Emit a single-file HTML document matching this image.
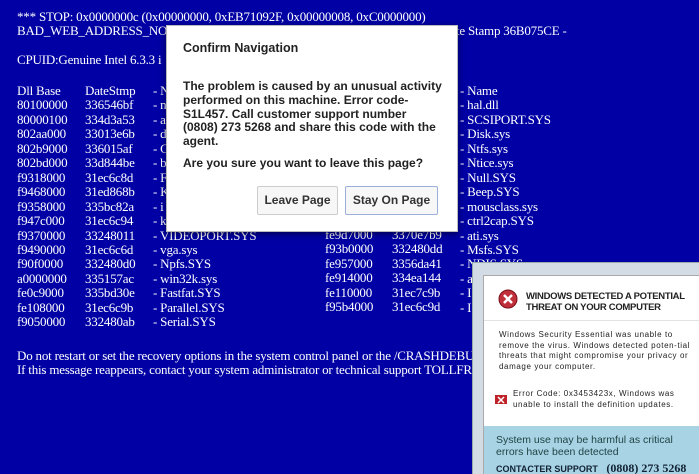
<!DOCTYPE html>
<html><head><meta charset="utf-8"><style>
html,body{margin:0;width:699px;height:474px;overflow:hidden;}
body{background:#0000a4;position:relative;font-family:"Liberation Serif",serif;color:#fff;}
.t{position:absolute;font-size:13px;line-height:15px;white-space:nowrap;letter-spacing:-.2px}
.dlg{position:absolute;left:166px;top:25px;width:290px;height:205px;background:#fff;border:1px solid #bbb;box-shadow:0 2px 6px rgba(0,0,0,.5);font-family:"Liberation Sans",sans-serif;color:#222;font-weight:bold;}
.dlg .h{position:absolute;left:16px;top:15px;font-size:12.5px;}
.dlg .b{position:absolute;left:16px;top:54px;font-size:12px;line-height:13.8px;white-space:nowrap;}
.dlg .q{position:absolute;left:16px;top:130px;font-size:12px;}
.btn{position:absolute;top:160px;height:27px;border:1px solid #ccc;border-radius:2px;background:#f7f7f7;font-size:12px;line-height:27px;text-align:center;color:#333;}
.pop{position:absolute;left:472px;top:262px;width:240px;height:220px;background:#d3dbe4;border:1px solid #9aa;}
.inner{position:absolute;left:10px;top:12px;width:230px;height:210px;background:#fff;border:1px solid #aaa;font-family:"Liberation Sans",sans-serif;color:#222;}
</style></head><body>
<div class="t" style="left:17px;top:9px">*** STOP: 0x0000000c (0x00000000, 0xEB71092F, 0x00000008, 0xC0000000)</div>
<div class="t" style="left:17px;top:23px">BAD_WEB_ADDRESS_NOT_FOUND</div>
<div class="t" style="left:456px;top:23px">te Stamp 36B075CE -</div>
<div class="t" style="left:17px;top:52px">CPUID:Genuine Intel 6.3.3 i</div>
<div class="t" style="left:17px;top:84px;line-height:14.45px">Dll Base<br>80100000<br>80000100<br>802aa000<br>802b9000<br>802bd000<br>f9318000<br>f9468000<br>f9358000<br>f947c000<br>f9370000<br>f9490000<br>f90f0000<br>a0000000<br>fe0c9000<br>fe108000<br>f9050000</div>
<div class="t" style="left:85px;top:84px;line-height:14.45px">DateStmp<br>336546bf<br>334d3a53<br>33013e6b<br>336015af<br>33d844be<br>31ec6c8d<br>31ed868b<br>335bc82a<br>31ec6c94<br>33248011<br>31ec6c6d<br>332480d0<br>335157ac<br>335bd30e<br>31ec6c9b<br>332480ab</div>
<div class="t" style="left:153px;top:84px;line-height:14.45px">- N<br>- n<br>- a<br>- d<br>- C<br>- b<br>- F<br>- K<br>- i<br>- k<br>- VIDEOPORT.SYS<br>- vga.sys<br>- Npfs.SYS<br>- win32k.sys<br>- Fastfat.SYS<br>- Parallel.SYS<br>- Serial.SYS</div>
<div class="t" style="left:325px;top:228px;line-height:14.45px">fe9d7000<br>f93b0000<br>fe957000<br>fe914000<br>fe110000<br>f95b4000</div>
<div class="t" style="left:392px;top:228px;line-height:14.45px">3370e7b9<br>332480dd<br>3356da41<br>334ea144<br>31ec7c9b<br>31ec6c9d</div>
<div class="t" style="left:460px;top:84px;line-height:14.45px">- Name<br>- hal.dll<br>- SCSIPORT.SYS<br>- Disk.sys<br>- Ntfs.sys<br>- Ntice.sys<br>- Null.SYS<br>- Beep.SYS<br>- mousclass.sys<br>- ctrl2cap.SYS<br>- ati.sys<br>- Msfs.SYS<br>- NDIS.SYS<br>- a<br>- I<br>- I</div>
<div class="t" style="left:17px;top:348px">Do not restart or set the recovery options in the system control panel or the /CRASHDEBUG</div>
<div class="t" style="left:17px;top:362px">If this message reappears, contact your system administrator or technical support TOLLFREE</div>

<div class="dlg">
<div class="h">Confirm Navigation</div>
<div class="b">The problem is caused by an unusual activity<br>performed on this machine. Error code-<br>S1L457. Call customer support number<br>(0808) 273 5268 and share this code with the<br>agent.</div>
<div class="q">Are you sure you want to leave this page?</div>
<div class="btn" style="left:90px;width:79px">Leave Page</div>
<div class="btn" style="left:178px;width:91px;border-color:#9ab0d8">Stay On Page</div>
</div>

<div class="pop"><div class="inner">
<svg style="position:absolute;left:14px;top:13px" width="20" height="20"><circle cx="10" cy="10" r="9" fill="#c0303a"/><circle cx="10" cy="10" r="9" fill="none" stroke="#7a1018"/><path d="M6 6L14 14M14 6L6 14" stroke="#fff" stroke-width="2.5"/></svg>
<div style="position:absolute;left:42px;top:15px;font-size:9.5px;font-weight:bold;line-height:11px;letter-spacing:-.3px">WINDOWS DETECTED A POTENTIAL<br>THREAT ON YOUR COMPUTER</div>
<div style="position:absolute;left:0;top:44px;width:230px;border-top:1px solid #e3e3e3"></div>
<div style="position:absolute;left:15px;top:54px;font-size:8px;line-height:10.5px;letter-spacing:.6px;width:205px">Windows Security Essential was unable to remove the virus. Windows detected poten-tial threats that might compromise your privacy or damage your computer.</div>
<svg style="position:absolute;left:10px;top:115px" width="14" height="14"><rect x="1" y="4" width="12" height="9" fill="#c02028"/><path d="M4 6L10 12M10 6L4 12" stroke="#fff" stroke-width="1.5"/></svg>
<div style="position:absolute;left:29px;top:112px;font-size:8px;line-height:11px;letter-spacing:.6px">Error Code: 0x3453423x, Windows was<br>unable to install the definition updates.</div>
<div style="position:absolute;left:0;top:150px;width:230px;height:70px;background:#a7d3e5"></div>
<div style="position:absolute;left:12px;top:158px;font-size:10.5px;line-height:12px;color:#244;">System use may be harmful as critical<br>errors have been detected</div>
<div style="position:absolute;left:12px;top:185px;font-size:9px;font-weight:bold;color:#123">CONTACTER SUPPORT <span style="font-family:'Liberation Serif',serif;font-size:12px;margin-left:6px">(0808) 273 5268</span></div>
</div></div>
</body></html>
